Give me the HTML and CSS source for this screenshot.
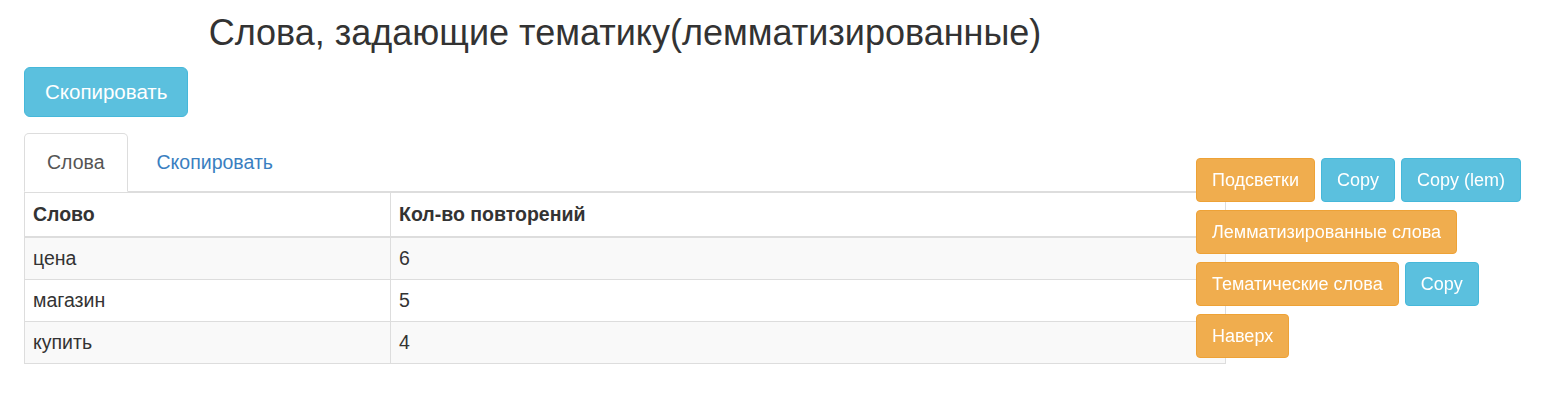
FILE: index.html
```html
<!DOCTYPE html>
<html lang="ru">
<head>
<meta charset="utf-8">
<title>Слова, задающие тематику</title>
<link rel="stylesheet" href="styles.css">
</head>
<body>
<div class="page">
  <h1 class="title">Слова, задающие тематику(лемматизированные)</h1>
  <button class="btn btn-info btn-big">Скопировать</button>
  <ul class="tabs">
    <li class="tab active"><a>Слова</a></li>
    <li class="tab"><a>Скопировать</a></li>
  </ul>
  <table class="words">
    <colgroup><col class="c1"><col class="c2"></colgroup>
    <thead>
      <tr><th>Слово</th><th>Кол-во повторений</th></tr>
    </thead>
    <tbody>
      <tr class="odd"><td>цена</td><td>6</td></tr>
      <tr><td>магазин</td><td>5</td></tr>
      <tr class="odd"><td>купить</td><td>4</td></tr>
    </tbody>
  </table>
</div>
<div class="side">
  <div class="side-row">
    <button class="btn btn-warn">Подсветки</button>
    <button class="btn btn-info">Copy</button>
    <button class="btn btn-info">Copy (lem)</button>
  </div>
  <div class="side-row">
    <button class="btn btn-warn">Лемматизированные слова</button>
  </div>
  <div class="side-row">
    <button class="btn btn-warn">Тематические слова</button>
    <button class="btn btn-info">Copy</button>
  </div>
  <div class="side-row">
    <button class="btn btn-warn">Наверх</button>
  </div>
</div>
</body>
</html>
```
FILE: styles.css
```css
* { box-sizing: border-box; }
html, body { margin: 0; padding: 0; background: #fff; }
body {
  font-family: "Liberation Sans", Arial, Helvetica, sans-serif;
  color: #333;
}
.page {
  width: 1202px;
  margin-left: 24px;
  display: flex;
  flex-direction: column;
  align-items: flex-start;
}
.title {
  align-self: stretch;
  text-align: center;
  font-size: 36px;
  line-height: 43px;
  font-weight: normal;
  margin: 11px 0 0;
  color: #333;
}
.btn {
  font-family: inherit;
  border: 1px solid;
  color: #fff;
  cursor: pointer;
  white-space: nowrap;
}
.btn-info { background: #5bc0de; border-color: #46b8da; }
.btn-warn { background: #f0ad4e; border-color: #eea236; }
.btn-big {
  margin-top: 13px;
  height: 50px;
  padding: 0 20px;
  font-size: 20.5px;
  border-radius: 6px;
}
.tabs {
  align-self: stretch;
  list-style: none;
  margin: 16px 0 0;
  padding: 0;
  display: flex;
  gap: 2px;
  border-bottom: 1px solid #ddd;
}
.tab { margin-bottom: -1px; }
.tab a {
  display: block;
  height: 59px;
  line-height: 57px;
  padding: 0 22px;
  font-size: 19.5px;
  color: #3a7fc1;
  border: 1px solid transparent;
  border-radius: 5px 5px 0 0;
}
.tab.active a {
  color: #555;
  background: #fff;
  border-color: #ddd #ddd transparent;
}
.tab + .tab a { padding-left: 26px; }
.words {
  width: 100%;
  table-layout: fixed;
  border-collapse: collapse;
  border: 1px solid #ddd;
  font-size: 19.5px;
}
.c1 { width: 366px; }
.words th, .words td {
  text-align: left;
  padding: 8px 8px;
  line-height: 25px;
  border: 1px solid #ddd;
}
.words th {
  font-weight: bold;
  border-bottom: 2px solid #ddd;
  border-top: 0;
  padding-top: 9px;
  padding-bottom: 9px;
}
.words tr.odd td { background: #f9f9f9; }
.side {
  position: fixed;
  left: 1196px;
  top: 158px;
  display: flex;
  flex-direction: column;
  gap: 8px;
}
.side-row { display: flex; gap: 6px; }
.side .btn {
  height: 44px;
  padding: 0 15px;
  font-size: 18px;
  border-radius: 4px;
}
```
